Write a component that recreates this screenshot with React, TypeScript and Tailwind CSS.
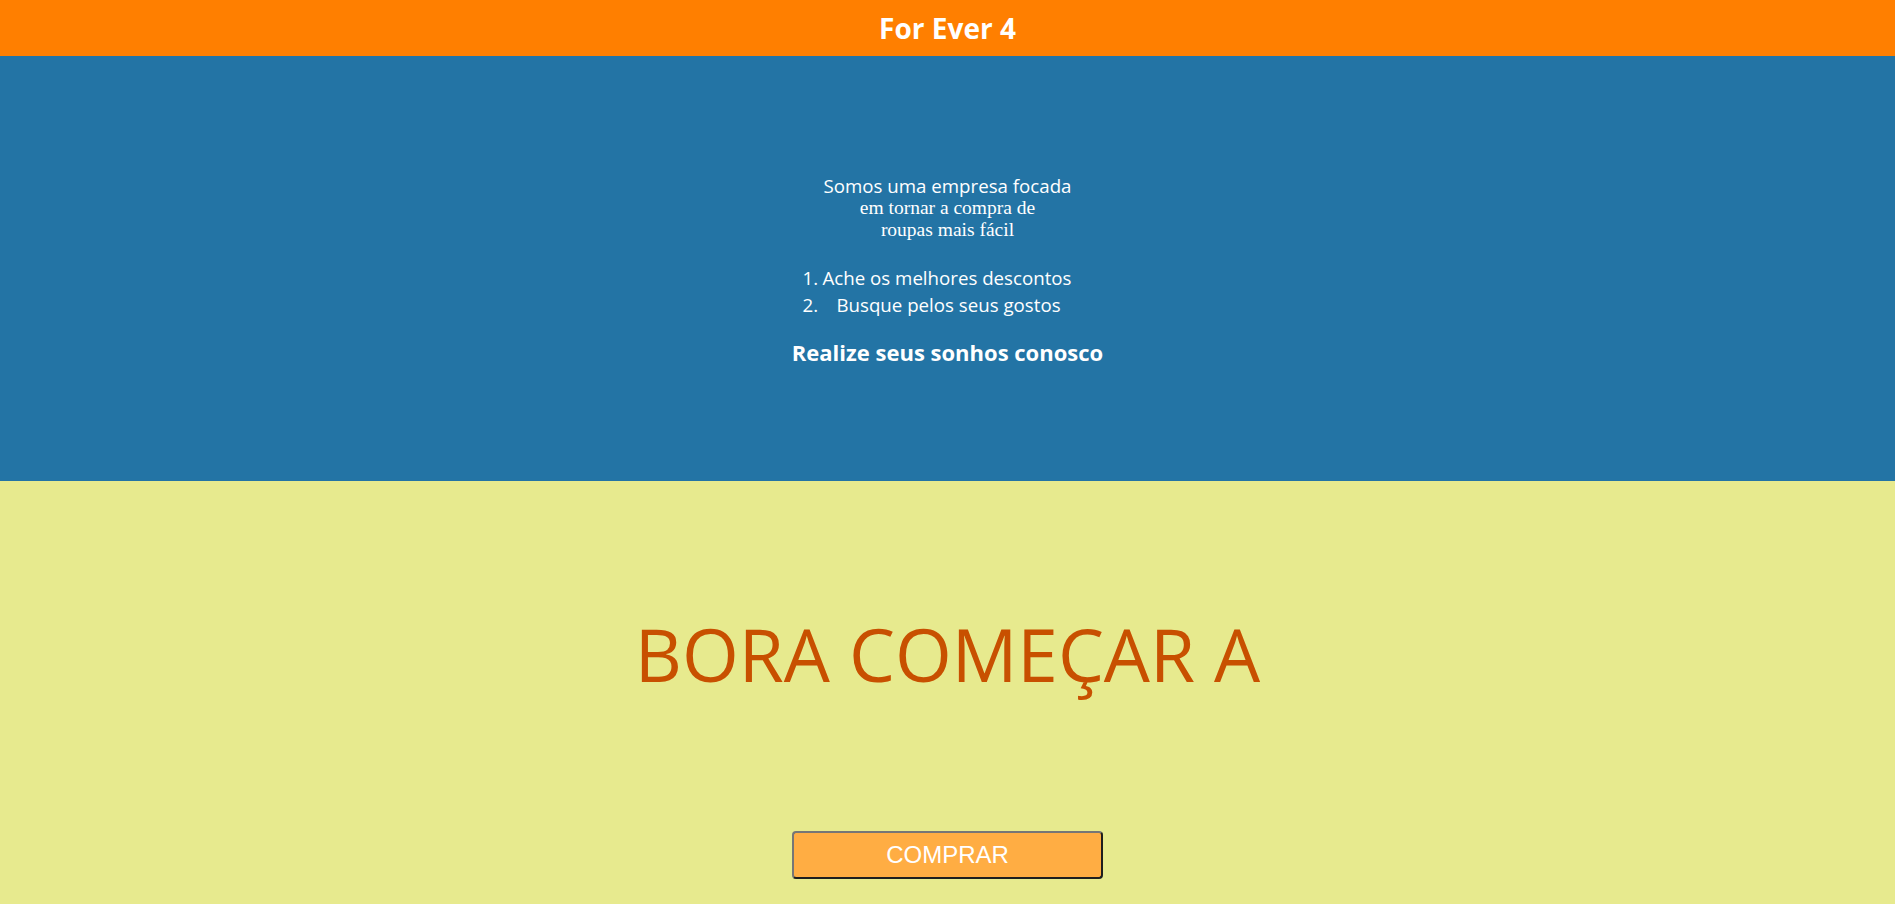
export default function App() {
  return (
    <div className="min-h-screen w-full font-['Open_Sans',sans-serif] text-white">
      <header className="flex h-[56px] items-center justify-center bg-[#ff7f00]">
        <h1 className="text-[28px] font-bold leading-none">For Ever 4</h1>
      </header>

      <section className="flex h-[425px] flex-col items-center bg-[#2374a5] pt-[119px]">
        <p className="text-center text-[18.7px] leading-[22px]">Somos uma empresa focada</p>
        <p className="text-center font-['Liberation_Serif',serif] text-[19.5px] leading-[22px]">
          em tornar a compra de
          <br />
          roupas mais fácil
        </p>

        <div className="mt-[26px] flex w-full justify-center">
          <ol className="mr-[19px] flex w-[271px] flex-col gap-[5px] text-[18.7px] leading-[22px]">
            <li className="flex">
              <span className="w-[20px] shrink-0">1.</span>
              <span className="whitespace-nowrap">Ache os melhores descontos</span>
            </li>
            <li className="flex">
              <span className="w-[34px] shrink-0">2.</span>
              <span className="whitespace-nowrap">Busque pelos seus gostos</span>
            </li>
          </ol>
        </div>

        <h2 className="mt-[23px] text-center text-[22px] font-bold leading-[26px]">Realize seus sonhos conosco</h2>
      </section>

      <section className="flex flex-col items-center bg-[#e7ea8e] pb-[25px] pt-[133px]">
        <div className="w-full text-center text-[73px] leading-[80px] text-[#c85000]">BORA COMEÇAR A</div>
        <button className="mt-[137px] h-[48px] w-[311px] rounded-[4px] border-2 border-b-[#1e1e1e] border-l-[#767676] border-r-[#1e1e1e] border-t-[#767676] bg-[#ffad43] font-['Liberation_Sans',Arial,sans-serif] text-[24px] leading-none text-white">
          COMPRAR
        </button>
      </section>
    </div>
  );
}
